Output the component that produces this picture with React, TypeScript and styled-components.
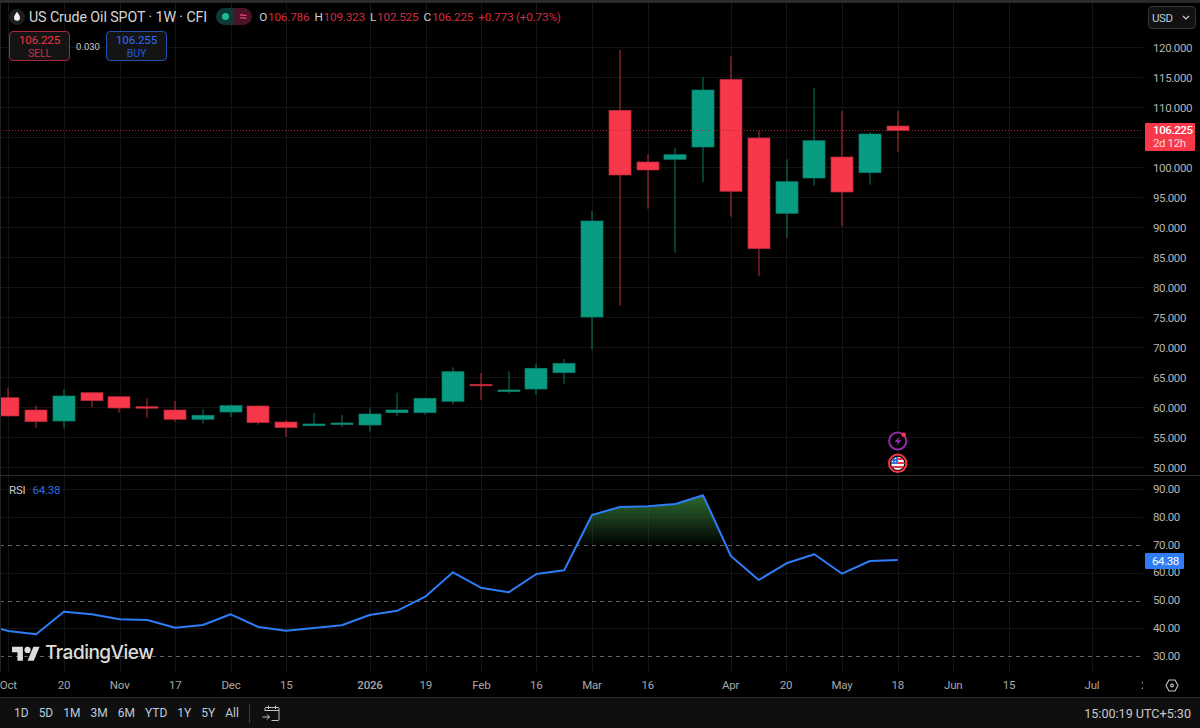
import React from 'react';
import styled, { createGlobalStyle } from 'styled-components';

const GlobalStyle = createGlobalStyle`
  html, body {
    margin: 0;
    background: #000;
    overflow: hidden;
  }
  * {
    box-sizing: border-box;
  }
`;

const FONT = `'Roboto', 'Liberation Sans', sans-serif`;
const RED = '#f7374a';
const GREEN = '#089c82';

const Page = styled.div`
  width: 1200px;
  height: 728px;
  display: flex;
  flex-direction: column;
  background: #000;
  font-family: ${FONT};
  color: #c8c8c8;
  overflow: hidden;
`;

const TopEdge = styled.div`
  height: 3px;
  flex: none;
  background: #2a2a2a;
`;

const Panes = styled.div`
  display: grid;
  grid-template-columns: 1143px 57px;
  grid-template-rows: 472px 1px 196px 25px;
  flex: none;
`;

const Pane = styled.div`
  position: relative;
  overflow: hidden;
  border-left: 1px solid #222;
`;

const Drawing = styled.svg`
  display: block;
  position: absolute;
  left: -1px;
  top: 0;
`;

const Divider = styled.div`
  grid-column: 1 / 3;
  background: #2e2e2e;
`;

const PriceAxis = styled.div<{ $pad: number }>`
  position: relative;
  display: flex;
  flex-direction: column;
  padding: ${(p) => p.$pad}px 0 0 10px;
`;

const AxisLabel = styled.div<{ $height: number }>`
  height: ${(p) => p.$height}px;
  flex: none;
  line-height: ${(p) => p.$height}px;
  font-size: 11.5px;
  letter-spacing: -0.4px;
  color: #b4b4b4;
`;

const UsdButton = styled.div`
  position: absolute;
  left: 5px;
  top: 3px;
  width: 48px;
  height: 23px;
  display: flex;
  align-items: center;
  justify-content: space-between;
  padding: 0 5px 0 3px;
  background: #111;
  border: 1px solid #363636;
  border-radius: 4px;
  font-size: 11.5px;
  letter-spacing: -0.4px;
  color: #b9c9dc;
`;

const PriceTag = styled.div`
  position: absolute;
  left: 2px;
  top: 120px;
  width: 50px;
  height: 28px;
  padding: 1px 0 0 8px;
  background: ${RED};
  border-radius: 1px;
  font-size: 11.5px;
  font-weight: 500;
  line-height: 13px;
  letter-spacing: -0.4px;
  color: #fff;
`;

const TagSub = styled.div`
  font-weight: 400;
  color: #ffd5d8;
`;

const RsiTag = styled.div`
  position: absolute;
  left: 2px;
  top: 77px;
  width: 39px;
  height: 16px;
  padding-left: 7px;
  background: #2e7cf6;
  border-radius: 1px;
  font-size: 11.5px;
  line-height: 16px;
  letter-spacing: -0.4px;
  color: #fff;
`;

const Legend = styled.div`
  position: absolute;
  left: 8px;
  top: 5px;
  display: flex;
  flex-direction: column;
  gap: 6px;
`;

const LegendRow = styled.div`
  display: flex;
  align-items: center;
  height: 17px;
`;

const SymbolIcon = styled.svg`
  flex: none;
  margin-right: 4px;
`;

const Title = styled.span`
  font-size: 14.2px;
  letter-spacing: -0.08px;
  color: #d6d6d6;
  margin-right: 9px;
  white-space: nowrap;
`;

const Pill = styled.div`
  display: flex;
  width: 36px;
  height: 17px;
  border-radius: 9px;
  overflow: hidden;
  margin-right: 7px;
`;

const PillPart = styled.div<{ $bg: string }>`
  flex: 1;
  display: flex;
  align-items: center;
  justify-content: center;
  background: ${(p) => p.$bg};
`;

const Dot = styled.div`
  width: 7px;
  height: 7px;
  border-radius: 50%;
  background: #1fb89a;
`;

const Wave = styled.span`
  font-size: 14px;
  line-height: 17px;
  color: #f0457a;
`;

const Ohlc = styled.span`
  font-size: 11.8px;
  letter-spacing: -0.22px;
  color: #d12c40;
  white-space: nowrap;
  margin-right: 5px;
`;

const OhlcKey = styled.span`
  color: #cfcfcf;
  margin-right: 1px;
`;

const TradeRow = styled.div`
  display: flex;
  align-items: center;
`;

const TradeButton = styled.div<{ $border: string; $color: string }>`
  width: 61px;
  height: 30px;
  display: flex;
  flex-direction: column;
  align-items: center;
  justify-content: center;
  background: #141414;
  border: 1px solid ${(p) => p.$border};
  border-radius: 4px;
  color: ${(p) => p.$color};
  font-size: 11.5px;
  line-height: 14px;
  letter-spacing: -0.1px;
`;

const TradeCaption = styled.div`
  font-size: 10.5px;
  line-height: 13px;
  opacity: 0.8;
`;

const Spread = styled.div`
  width: 36px;
  text-align: center;
  font-size: 9.5px;
  color: #cfcfcf;
`;

const RsiLegend = styled.div`
  position: absolute;
  left: 8px;
  top: 7px;
  display: flex;
  gap: 7px;
  font-size: 11.5px;
  line-height: 14px;
  letter-spacing: -0.2px;
  color: #c8c8c8;
`;

const RsiValue = styled.span`
  color: #2a6fdf;
`;

const Watermark = styled.div`
  position: absolute;
  left: 11px;
  top: 165px;
  display: flex;
  align-items: center;
  gap: 5px;
  font-family: 'Inter', sans-serif;
  font-size: 19px;
  font-weight: 500;
  letter-spacing: -0.5px;
  line-height: 24px;
  color: #dcdcdc;
`;

const TimeAxis = styled.div`
  position: relative;
  overflow: hidden;
`;

const TimeLabel = styled.span<{ $strong: boolean }>`
  position: absolute;
  top: 5px;
  transform: translateX(-50%);
  font-size: 11.5px;
  line-height: 16px;
  letter-spacing: -0.2px;
  color: #a8a8a8;
  font-weight: ${(p) => (p.$strong ? 500 : 400)};
`;

const AxisCorner = styled.div`
  display: flex;
  align-items: center;
  justify-content: flex-start;
  padding: 2px 0 0 22px;
`;

const Toolbar = styled.div`
  flex: 1;
  display: flex;
  align-items: center;
  padding: 0 9px 0 14px;
  background: #0f0f0f;
  border-top: 1px solid #2e2e2e;
`;

const RangeList = styled.div`
  display: flex;
  gap: 10px;
`;

const RangeItem = styled.span`
  font-size: 12px;
  color: #bccbdc;
`;

const ToolbarSep = styled.div`
  width: 1px;
  height: 19px;
  margin: 0 12px 0 10px;
  background: #3a3a3a;
`;

const Clock = styled.span`
  margin-left: auto;
  font-size: 12.6px;
  color: #c9c9c9;
`;

// high, body top, body bottom, low (page y), up
const CANDLES: [number, number, number, number, boolean][] = [
  [388, 397.7, 416, 416, false],
  [405.7, 410, 421.7, 427.7, false],
  [389.3, 396, 421, 428.3, true],
  [392, 392.7, 400.7, 407.3, false],
  [396.7, 396.7, 408, 412.7, false],
  [398.3, 406.7, 407.7, 417.7, false],
  [401, 410, 419.3, 421.7, false],
  [409.3, 415.3, 419.3, 423.7, true],
  [404.3, 405.7, 412, 417, true],
  [405.3, 406, 422.7, 424.7, false],
  [420.3, 422, 427.7, 437, false],
  [413, 424, 425.7, 426, true],
  [415, 423, 424.3, 427, true],
  [408.3, 414, 425, 431.7, true],
  [392.7, 410, 412.7, 416.3, true],
  [397.7, 398.3, 412.7, 414.7, true],
  [367.3, 371.7, 401.3, 404.7, true],
  [373, 384.3, 385.7, 400, false],
  [371.3, 390, 391, 393.3, true],
  [364, 368.3, 389, 394.7, true],
  [359, 363.3, 372.7, 384.3, true],
  [211, 221, 317, 350, true],
  [50, 110.3, 175, 305.7, false],
  [154, 162, 170, 208.7, false],
  [148, 154.7, 159.3, 252.7, true],
  [77, 90, 147, 182.3, true],
  [56.3, 79.3, 191.3, 216.7, false],
  [131, 138, 248.7, 276.3, false],
  [159.3, 181.7, 213.3, 238, true],
  [87.7, 140.7, 178, 185.7, true],
  [111, 157, 192, 226.3, false],
  [132, 134, 172.7, 184.7, true],
  [111, 126, 130.7, 151.7, false],
];

const barX = (i: number) => 8.3 + i * 27.794;

const RSI_Y = [
  631, 634.3, 611.7, 614.3, 619.3, 620, 627.7, 625, 614.3, 627, 630.7, 628, 625.3, 615, 610.7,
  596.7, 572.3, 587.7, 592.3, 574, 570.3, 515, 507, 506.3, 504, 495.3, 556, 580, 563.3, 554.3,
  573.7, 561, 560,
];

const TIME_LABELS: [string, number, boolean][] = [
  ['Oct', 8.3, false],
  ['20', 64, false],
  ['Nov', 119.7, false],
  ['17', 175.3, false],
  ['Dec', 231, false],
  ['15', 286.3, false],
  ['2026', 370, true],
  ['19', 425.7, false],
  ['Feb', 481.3, false],
  ['16', 536.3, false],
  ['Mar', 592, false],
  ['16', 647.7, false],
  ['Apr', 730.7, false],
  ['20', 786, false],
  ['May', 842, false],
  ['18', 897.7, false],
  ['Jun', 953.3, false],
  ['15', 1008.9, false],
  ['Jul', 1092, false],
  ['20', 1147.5, false],
];

const MAIN_LEVELS = Array.from({ length: 15 }, (_, i) => 120 - i * 5);
const RSI_LEVELS = [90, 80, 70, 60, 50, 40, 30];
const rsiY = (v: number) => 489.3 + (90 - v) * 2.783;
const RANGES = ['1D', '5D', '1M', '3M', '6M', 'YTD', '1Y', '5Y', 'All'];
// this level sits under the live price tag
const HIDDEN_LEVEL = 105;

const VerticalGrid = ({ top, bottom }: { top: number; bottom: number }) => (
  <g stroke="#141414" shapeRendering="crispEdges">
    {TIME_LABELS.slice(0, -1).map(([label, x]) => (
      <line key={label + x} x1={Math.round(x) + 0.5} x2={Math.round(x) + 0.5} y1={top} y2={bottom} />
    ))}
  </g>
);

const Candle = ({ index, bar }: { index: number; bar: (typeof CANDLES)[number] }) => {
  const [high, top, bottom, low, up] = bar;
  const x = Math.round(barX(index));
  return (
    <g>
      <rect x={x - 0.5} y={high} width={1} height={low - high} fill={up ? '#077a67' : '#c22c3c'} />
      <rect
        x={x - 11}
        y={top}
        width={22}
        height={Math.max(bottom - top, 1.5)}
        fill={up ? GREEN : RED}
        stroke={up ? '#0a7f6c' : '#b32a38'}
        strokeWidth={0.7}
      />
    </g>
  );
};

const Markers = () => (
  <g>
    <circle cx={897.7} cy={441} r={8.6} fill="#000" stroke="#8e2aa8" strokeWidth={2} />
    <path d="M899.6 436.2l-5 5.8h3.2l-1.4 4 5-5.8h-3.2z" fill="#9a30b4" />
    <circle cx={903.7} cy={434.8} r={2.3} fill={RED} />
    <circle cx={897.7} cy={463.3} r={8.7} fill="#000" stroke={RED} strokeWidth={2} />
    <clipPath id="flag">
      <circle cx={897.7} cy={463.3} r={6.6} />
    </clipPath>
    <g clipPath="url(#flag)">
      <rect x={890} y={456} width={16} height={15} fill="#f4f4f4" />
      <rect x={890} y={458} width={16} height={2} fill="#e03a44" />
      <rect x={890} y={462} width={16} height={2} fill="#e03a44" />
      <rect x={890} y={466} width={16} height={2} fill="#e03a44" />
      <rect x={890} y={456} width={8} height={8} fill="#3b6fd8" />
      <rect x={892} y={458} width={1} height={1} fill="#fff" />
      <rect x={895} y={458} width={1} height={1} fill="#fff" />
      <rect x={892} y={461} width={1} height={1} fill="#fff" />
      <rect x={895} y={461} width={1} height={1} fill="#fff" />
    </g>
  </g>
);

const MainChart = () => (
  <Drawing width={1143} height={472} viewBox="0 3 1143 472">
    <g stroke="#141414" shapeRendering="crispEdges">
      {MAIN_LEVELS.map((_, i) => (
        <line key={i} x1={0} x2={1143} y1={47.5 + i * 30} y2={47.5 + i * 30} />
      ))}
    </g>
    <VerticalGrid top={3} bottom={475} />
    {CANDLES.map((bar, i) => (
      <Candle key={i} index={i} bar={bar} />
    ))}
    <line
      x1={0}
      x2={1143}
      y1={130.5}
      y2={130.5}
      stroke="#b3242f"
      strokeWidth={1}
      strokeDasharray="1 2"
      shapeRendering="crispEdges"
    />
    <Markers />
  </Drawing>
);

const RsiChart = () => {
  const pts = RSI_Y.map((y, i) => `${barX(i).toFixed(1)},${y}`);
  return (
    <Drawing width={1143} height={196} viewBox="0 476 1143 196">
      <defs>
        <linearGradient id="over" x1="0" y1="495" x2="0" y2="545" gradientUnits="userSpaceOnUse">
          <stop offset="0" stopColor="#2d6a30" />
          <stop offset="1" stopColor="#2d6a30" stopOpacity={0.03} />
        </linearGradient>
      </defs>
      <g stroke="#141414" shapeRendering="crispEdges">
        {[90, 80, 60, 40].map((v) => (
          <line key={v} x1={0} x2={1143} y1={Math.round(rsiY(v)) + 0.5} y2={Math.round(rsiY(v)) + 0.5} />
        ))}
      </g>
      <VerticalGrid top={476} bottom={672} />
      <g stroke="#636363" strokeDasharray="4 4" shapeRendering="crispEdges">
        {[70, 50, 30].map((v) => (
          <line key={v} x1={0} x2={1143} y1={Math.round(rsiY(v)) + 0.5} y2={Math.round(rsiY(v)) + 0.5} />
        ))}
      </g>
      <polygon
        points={`576.7,545 ${pts.slice(21, 26).join(' ')} 725.7,545`}
        fill="url(#over)"
      />
      <polyline
        points={`0,628.7 ${pts.join(' ')}`}
        fill="none"
        stroke="#2e7cf6"
        strokeWidth={2}
        strokeLinejoin="round"
      />
    </Drawing>
  );
};

const App = () => (
  <Page>
    <GlobalStyle />
    <TopEdge />
    <Panes>
      <Pane>
        <MainChart />
        <Legend>
          <LegendRow>
            <SymbolIcon width={16} height={16} viewBox="0 0 16 16">
              <circle cx={8} cy={8} r={8} fill="#1e1e1e" />
              <path d="M8 2.8c1.8 2.6 3 4.3 3 6a3 3 0 0 1-6 0c0-1.7 1.2-3.4 3-6z" fill="#f2f2f2" />
            </SymbolIcon>
            <Title>US Crude Oil SPOT · 1W · CFI</Title>
            <Pill>
              <PillPart $bg="#0d3a33">
                <Dot />
              </PillPart>
              <PillPart $bg="#4a1428">
                <Wave>≈</Wave>
              </PillPart>
            </Pill>
            <Ohlc><OhlcKey>O</OhlcKey>106.786</Ohlc>
            <Ohlc><OhlcKey>H</OhlcKey>109.323</Ohlc>
            <Ohlc><OhlcKey>L</OhlcKey>102.525</Ohlc>
            <Ohlc><OhlcKey>C</OhlcKey>106.225</Ohlc>
            <Ohlc>+0.773 (+0.73%)</Ohlc>
          </LegendRow>
          <TradeRow>
            <TradeButton $border="#a82a38" $color="#f23645">
              106.225
              <TradeCaption>SELL</TradeCaption>
            </TradeButton>
            <Spread>0.030</Spread>
            <TradeButton $border="#2050b0" $color="#2f6bff">
              106.255
              <TradeCaption>BUY</TradeCaption>
            </TradeButton>
          </TradeRow>
        </Legend>
      </Pane>
      <PriceAxis $pad={30}>
        {MAIN_LEVELS.map((v) => (
          <AxisLabel key={v} $height={30}>{v === HIDDEN_LEVEL ? '' : v.toFixed(3)}</AxisLabel>
        ))}
        <UsdButton>
          USD
          <svg width={8} height={5} viewBox="0 0 8 5">
            <path d="M1 1l3 3 3-3" fill="none" stroke="#d0d0d0" strokeWidth={1.2} />
          </svg>
        </UsdButton>
        <PriceTag>
          106.225
          <TagSub>2d 12h</TagSub>
        </PriceTag>
      </PriceAxis>
      <Divider />
      <Pane>
        <RsiChart />
        <RsiLegend>
          RSI
          <RsiValue>64.38</RsiValue>
        </RsiLegend>
        <Watermark>
          <svg width={28} height={16} viewBox="0 0 36 20">
            <path d="M14 20H7V9H0V2h14v18zM28 20h-8l7.5-18h8L28 20z" fill="#dcdcdc" />
            <circle cx={20} cy={6} r={4} fill="#dcdcdc" />
          </svg>
          TradingView
        </Watermark>
      </Pane>
      <PriceAxis $pad={0}>
        {RSI_LEVELS.map((v) => (
          <AxisLabel key={v} $height={27.83}>{v.toFixed(2)}</AxisLabel>
        ))}
        <RsiTag>64.38</RsiTag>
      </PriceAxis>
      <TimeAxis>
        {TIME_LABELS.map(([label, x, strong]) => (
          <TimeLabel key={label + x} $strong={strong} style={{ left: x }}>{label}</TimeLabel>
        ))}
      </TimeAxis>
      <AxisCorner>
        <svg width={14} height={13} viewBox="0 0 14 13">
          <path d="M4 1h6l3 5.5L10 12H4L1 6.5z" fill="none" stroke="#c4c4c4" strokeWidth={1.1} />
          <circle cx={7} cy={6.5} r={1.4} fill="none" stroke="#c4c4c4" strokeWidth={1.1} />
        </svg>
      </AxisCorner>
    </Panes>
    <Toolbar>
      <RangeList>
        {RANGES.map((r) => (
          <RangeItem key={r}>{r}</RangeItem>
        ))}
      </RangeList>
      <ToolbarSep />
      <svg width={18} height={18} viewBox="0 0 18 18" fill="none" stroke="#c4c4c4" strokeWidth={1}>
        <path d="M3 7V4.5a1 1 0 0 1 1-1h12a1 1 0 0 1 1 1v11a1 1 0 0 1-1 1H9.5" />
        <path d="M3 6.5h14M6.5 1.5v3.5M13.5 1.5v3.5" />
        <path d="M0.5 13h7M5 10.5L7.5 13 5 15.5" />
      </svg>
      <Clock>15:00:19 UTC+5:30</Clock>
    </Toolbar>
  </Page>
);

export default App;
